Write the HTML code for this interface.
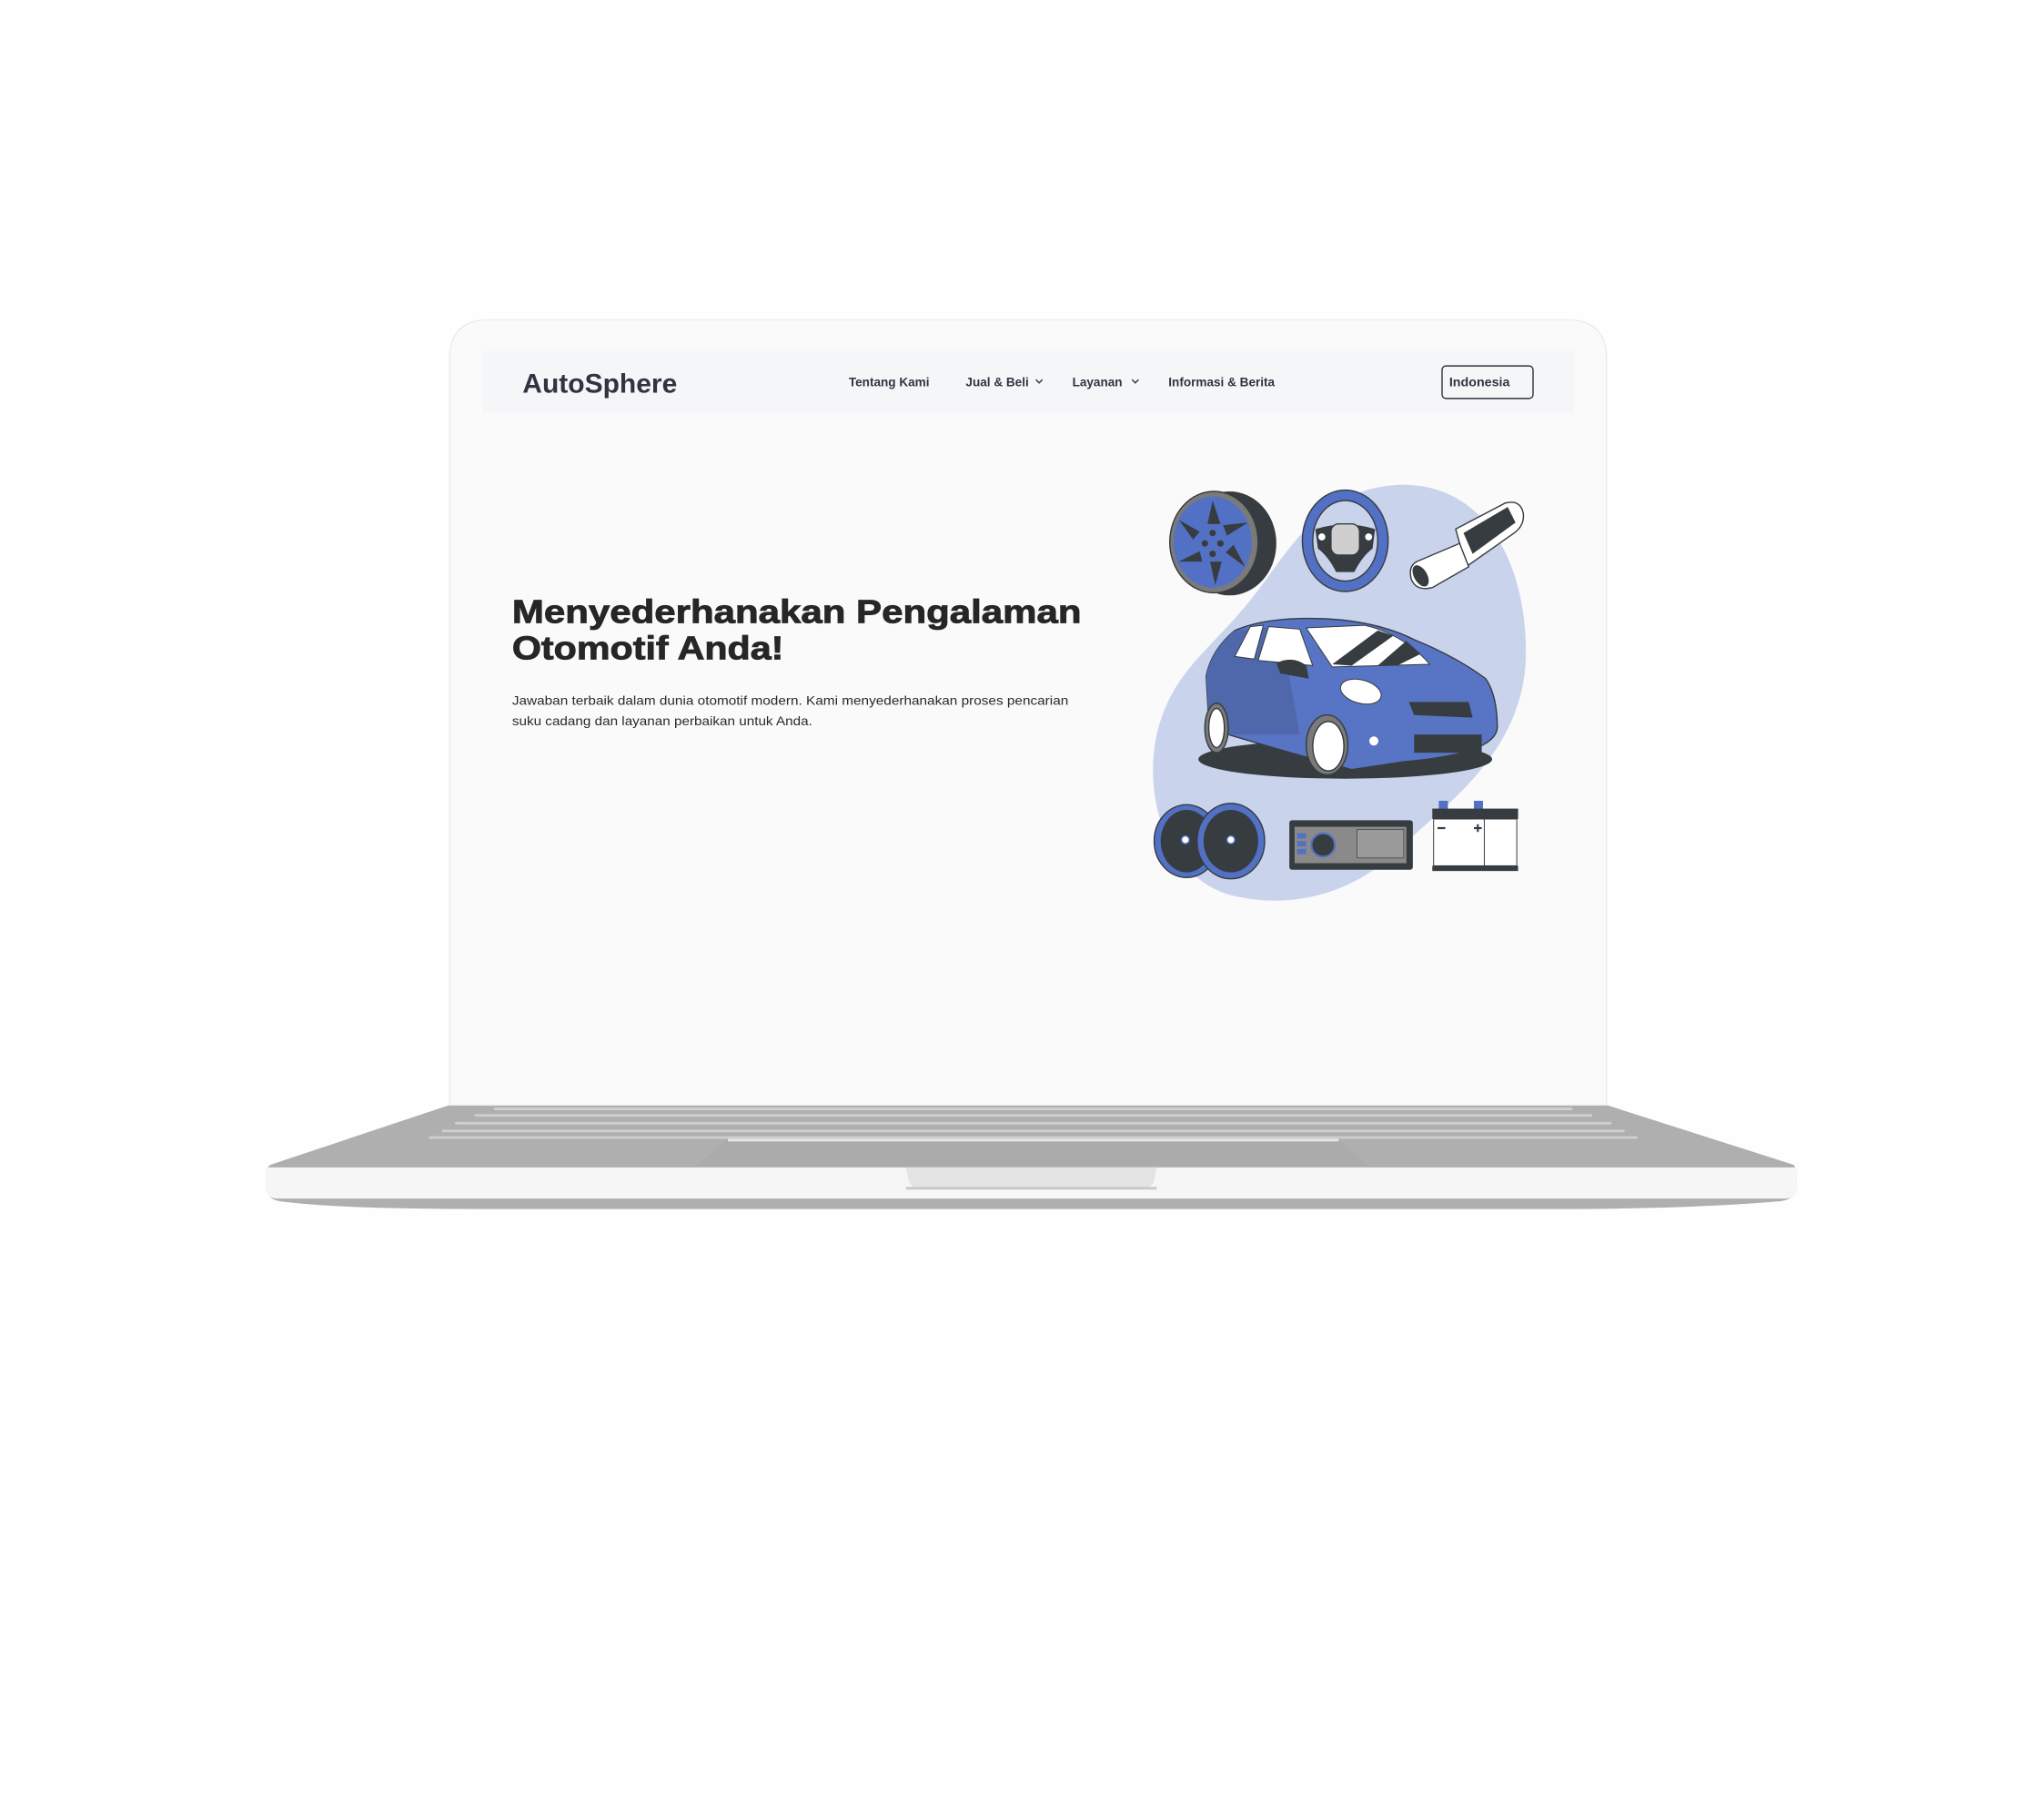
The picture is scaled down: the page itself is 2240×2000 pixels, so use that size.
<!DOCTYPE html>
<html><head><meta charset="utf-8"><style>
html,body{margin:0;padding:0;background:#fefefe;width:2240px;height:2000px;overflow:hidden}
svg{display:block}
text{font-family:"Liberation Sans",sans-serif}
</style></head><body>
<svg width="2240" height="2000" viewBox="0 0 1568 1400" xmlns="http://www.w3.org/2000/svg">
<rect width="1568" height="1400" fill="#fefefe"/>
<!-- laptop base -->
<path d="M346 850 L1236 850 L1380 896 Q1382 898 1382 902 L1382 914 Q1382 922 1370 924 Q1300 930 1200 930 L370 930 Q260 930 215 924 Q205 922 205 914 L205 902 Q205 898 208 896 Z" fill="#afafaf"/>
<path d="M205 898 L1382 898 L1382 916 Q1382 922 1372 922 L215 922 Q205 922 205 916 Z" fill="#f6f6f6"/>
<path d="M697 898 L890 898 L888 908 Q886 915 876 915 L711 915 Q701 915 699 908 Z" fill="#e4e4e4"/>
<rect x="697" y="913" width="193" height="2" fill="#c8c8c8"/>
<!-- keyboard -->
<g fill="#cfcfcf">
<rect x="380" y="852" width="830" height="2" rx="1"/>
<rect x="365" y="857" width="860" height="2" rx="1"/>
<rect x="350" y="863" width="890" height="2" rx="1"/>
<rect x="340" y="869" width="910" height="2" rx="1"/>
<rect x="330" y="874" width="930" height="2" rx="1"/>
</g>
<path d="M560 876 L1030 876 L1052 897 L535 897 Z" fill="#ababab"/>
<rect x="560" y="876" width="470" height="2" fill="#e6e6e6"/>
<!-- screen -->
<path d="M346 850 L346 276 Q346 246 376 246 L1206 246 Q1236 246 1236 276 L1236 850 Z" fill="#fafafa" stroke="#ececec" stroke-width="1"/>
<rect x="371" y="270" width="840" height="47" fill="#f5f6f8"/>
<text x="402" y="302" font-size="21" font-weight="700" fill="#2f3442">AutoSphere</text>
<g font-size="9.5" font-weight="700" fill="#2f3442">
<text x="653" y="297">Tentang Kami</text>
<text x="743" y="297">Jual &amp; Beli</text>
<text x="825" y="297">Layanan</text>
<text x="899" y="297">Informasi &amp; Berita</text>
</g>
<path d="M797 292 l2.5 2.5 l2.5 -2.5 M871 292 l2.5 2.5 l2.5 -2.5" stroke="#2f3442" fill="none" stroke-width="1"/>
<rect x="1109.5" y="281.5" width="70" height="25" rx="3" fill="none" stroke="#2f3442" stroke-width="1"/>
<text x="1115" y="297" font-size="10" font-weight="700" fill="#2f3442">Indonesia</text>
<text x="394" y="479" font-size="25" font-weight="900" fill="#262626" stroke="#262626" stroke-width=".6" textLength="438" lengthAdjust="spacingAndGlyphs">Menyederhanakan Pengalaman</text>
<text x="394" y="507" font-size="25" font-weight="900" fill="#262626" stroke="#262626" stroke-width=".6" textLength="209" lengthAdjust="spacingAndGlyphs">Otomotif Anda!</text>
<text x="394" y="542" font-size="9.5" fill="#2a2a2a" textLength="428" lengthAdjust="spacingAndGlyphs">Jawaban terbaik dalam dunia otomotif modern. Kami menyederhanakan proses pencarian</text>
<text x="394" y="558" font-size="9.5" fill="#2a2a2a" textLength="231" lengthAdjust="spacingAndGlyphs">suku cadang dan layanan perbaikan untuk Anda.</text>
<!-- illustration -->
<path d="M1075 373 C1140 370 1175 430 1174 505 C1172 580 1110 620 1080 650 C1040 690 990 700 945 688 C895 672 880 610 890 565 C900 520 930 500 955 470 C990 430 1010 377 1075 373 Z" fill="#c9d3ec"/>
<ellipse cx="946" cy="418" rx="36" ry="40" fill="#373c40"/>
<ellipse cx="934" cy="417" rx="34" ry="39" fill="#7a7a7a" stroke="#373c40"/>
<ellipse cx="933" cy="417" rx="30" ry="35" fill="#5271c4"/>
<g fill="#373c40">
<path d="M933 385 l6 18 l-10 0 Z"/><path d="M960 402 l-16 10 l-3 -8 Z"/><path d="M958 436 l-15 -11 l6 -6 Z"/>
<path d="M935 450 l-4 -18 l9 0 Z"/><path d="M907 432 l16 -8 l2 8 Z"/><path d="M907 400 l16 9 l-5 6 Z"/>
<circle cx="927" cy="418" r="2.5"/><circle cx="939" cy="418" r="2.5"/><circle cx="933" cy="410" r="2.5"/><circle cx="933" cy="426" r="2.5"/>
</g>
<ellipse cx="1035" cy="416" rx="33" ry="39" fill="#5271c4" stroke="#373c40"/>
<ellipse cx="1035" cy="416" rx="25" ry="31" fill="#c9d3ec" stroke="#373c40"/>
<path d="M1012 407 Q1035 400 1058 407 L1056 422 Q1048 428 1042 440 L1028 440 Q1022 428 1014 422 Z" fill="#373c40"/>
<rect x="1024" y="403" width="22" height="24" rx="6" fill="#cfcfcf" stroke="#373c40"/>
<circle cx="1017" cy="413" r="3" fill="#fff" stroke="#373c40" stroke-width=".6"/><circle cx="1053" cy="413" r="3" fill="#fff" stroke="#373c40" stroke-width=".6"/>
<path d="M1120 407 L1158 387 Q1170 384 1172 395 Q1173 404 1165 410 L1128 436 Z" fill="#fff" stroke="#373c40"/>
<path d="M1126 410 L1160 390 L1166 402 L1133 426 Z" fill="#373c40"/>
<path d="M1090 432 L1123 418 L1130 436 L1102 452 Q1090 455 1086 446 Q1083 436 1090 432 Z" fill="#fff" stroke="#373c40"/>
<ellipse cx="1093" cy="443" rx="5" ry="9" transform="rotate(-30 1093 443)" fill="#373c40"/>
<ellipse cx="1035" cy="584" rx="113" ry="15" fill="#373c40"/>
<path d="M930 555 L928 520 Q932 500 950 485 Q975 474 1020 476 Q1060 478 1088 492 Q1120 505 1143 522 Q1152 535 1152 560 Q1150 580 1080 586 L1040 592 Q995 580 945 565 Z" fill="#5874c4" stroke="#373c40"/>
<path d="M930 555 L928 520 Q932 500 950 485 L985 482 L1000 565 L945 565 Z" fill="#4e68ab"/>
<path d="M950 505 L962 482 L972 481 L965 507 Z M968 508 L976 482 L1000 484 L1010 512 Z" fill="#fff" stroke="#373c40" stroke-width=".7"/>
<path d="M1005 483 L1050 481 Q1080 488 1100 511 L1025 513 Z" fill="#fff" stroke="#373c40" stroke-width=".7"/>
<path d="M1025 511 L1060 485 L1072 489 L1040 512 Z M1060 512 L1082 493 L1093 503 L1075 512 Z" fill="#373c40"/>
<path d="M982 510 Q995 504 1005 512 L1007 522 L985 518 Z" fill="#373c40"/>
<ellipse cx="1047" cy="532" rx="16" ry="9" transform="rotate(15 1047 532)" fill="#fff" stroke="#373c40" stroke-width=".7"/>
<path d="M1084 540 L1130 540 L1133 552 L1088 550 Z" fill="#373c40"/>
<rect x="1088" y="565" width="52" height="14" fill="#373c40"/>
<circle cx="1057" cy="570" r="3.5" fill="#fff"/>
<ellipse cx="1021" cy="573" rx="16" ry="23" fill="#7a7a7a" stroke="#373c40"/><ellipse cx="1022" cy="574" rx="12" ry="19" fill="#fff" stroke="#373c40"/>
<ellipse cx="936" cy="560" rx="9" ry="19" fill="#7a7a7a" stroke="#373c40"/><ellipse cx="936" cy="560" rx="6" ry="15" fill="#fff" stroke="#373c40"/>
<ellipse cx="913" cy="647" rx="25" ry="28" fill="#5271c4" stroke="#373c40"/><ellipse cx="913" cy="647" rx="20" ry="24" fill="#373c40"/>
<ellipse cx="947" cy="647" rx="26" ry="29" fill="#5271c4" stroke="#373c40"/><ellipse cx="947" cy="647" rx="21" ry="24" fill="#373c40"/>
<circle cx="912" cy="646" r="3" fill="#fff" stroke="#5271c4"/><circle cx="947" cy="646" r="3" fill="#fff" stroke="#5271c4"/>
<rect x="992" y="631" width="95" height="38" rx="2" fill="#373c40"/>
<rect x="996" y="636" width="86" height="28" fill="#8a8a8a"/>
<rect x="1044" y="638" width="36" height="22" fill="#9a9a9a" stroke="#373c40" stroke-width=".5"/>
<circle cx="1018" cy="650" r="9" fill="#373c40" stroke="#5271c4" stroke-width="1.5"/>
<rect x="998" y="641" width="7" height="4" fill="#5271c4"/><rect x="998" y="647" width="7" height="4" fill="#5271c4"/><rect x="998" y="653" width="7" height="4" fill="#5271c4"/>
<rect x="1107" y="616" width="7" height="7" fill="#5271c4"/><rect x="1134" y="616" width="7" height="7" fill="#5271c4"/>
<rect x="1102" y="622" width="66" height="8" fill="#373c40"/>
<rect x="1103" y="630" width="64" height="36" fill="#fff" stroke="#373c40" stroke-width=".7"/>
<line x1="1142" y1="630" x2="1142" y2="666" stroke="#373c40" stroke-width=".7"/>
<rect x="1102" y="666" width="66" height="4" fill="#373c40"/>
<path d="M1106 637 h6 M1134 637 h6 M1137 634 v6" stroke="#373c40" stroke-width="1.5"/>
</svg>
</body></html>
